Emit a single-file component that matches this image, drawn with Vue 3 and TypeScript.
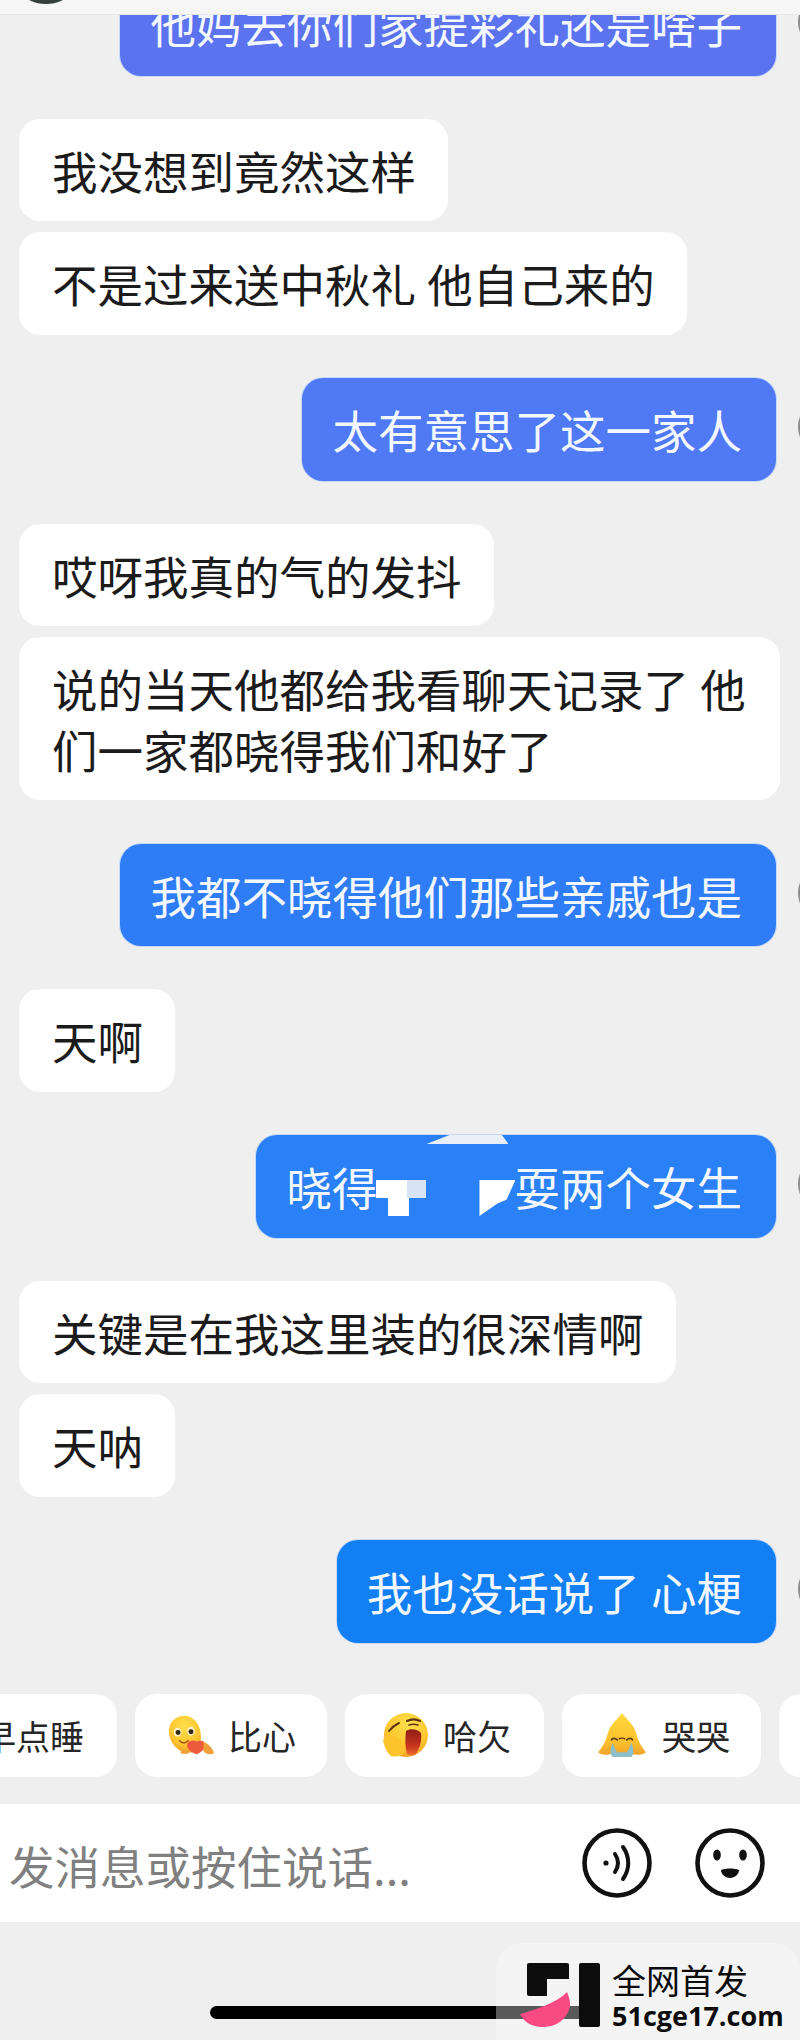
<script setup lang="ts">
type Msg = { side: "left" | "right"; text: string; color?: string };

const messages: Msg[] = [
  { side: "left", text: "我没想到竟然这样" },
  { side: "left", text: "不是过来送中秋礼 他自己来的" },
  { side: "right", text: "太有意思了这一家人", color: "#4f79f5" },
  { side: "left", text: "哎呀我真的气的发抖" },
  { side: "left", text: "说的当天他都给我看聊天记录了 他们一家都晓得我们和好了" },
  { side: "right", text: "我都不晓得他们那些亲戚也是", color: "#2f7df6" },
  { side: "left", text: "天啊" },
];

const messagesAfter: Msg[] = [
  { side: "left", text: "关键是在我这里装的很深情啊" },
  { side: "left", text: "天呐" },
  { side: "right", text: "我也没话说了 心梗", color: "#1280f4" },
];
</script>

<template>
  <div class="screen">
    <header class="topbar"><span class="top-avatar"></span></header>

    <main class="chat">
      <div class="msg right first">
        <div class="bubble" style="background: #5c73f0">他妈去你们家提彩礼还是啥子</div>
        <span class="avatar"></span>
      </div>

      <div v-for="(m, i) in messages" :key="i" class="msg" :class="m.side">
        <div class="bubble" :style="m.color ? { background: m.color } : undefined">{{ m.text }}</div>
        <span v-if="m.side === 'right'" class="avatar"></span>
      </div>

      <div class="msg right">
        <div class="bubble masked" style="background: #2a80f6">
          晓得<span class="hole"></span>耍两个女生
          <span class="mask-top"></span>
          <span class="mask-t"></span>
          <span class="mask-stem"></span>
          <span class="mask-corner"></span>
        </div>
        <span class="avatar"></span>
      </div>

      <div v-for="(m, i) in messagesAfter" :key="'b' + i" class="msg" :class="m.side">
        <div class="bubble" :style="m.color ? { background: m.color } : undefined">{{ m.text }}</div>
        <span v-if="m.side === 'right'" class="avatar"></span>
      </div>
    </main>

    <div class="chips">
      <div class="chip first-chip">早点睡</div>
      <div class="chip">
        <svg class="emo" viewBox="0 0 48 40">
          <defs>
            <radialGradient id="y1" cx="0.5" cy="0.3" r="0.75">
              <stop offset="0" stop-color="#ffe04c" />
              <stop offset="0.65" stop-color="#fcc52f" />
              <stop offset="1" stop-color="#ec9a25" />
            </radialGradient>
          </defs>
          <path d="M1 18C0 7 8 0 17 0c9 0 16 8 17 18 1 6 0 12-2 17-5 4-12 4-18 2C6 33 2 26 1 18z" fill="url(#y1)" />
          <ellipse cx="10" cy="17" rx="4" ry="4.6" fill="#fff3cc" />
          <ellipse cx="24" cy="16" rx="4" ry="4.6" fill="#fff3cc" />
          <circle cx="10.5" cy="17.5" r="2.6" fill="#33250f" />
          <circle cx="24" cy="16.5" r="2.6" fill="#33250f" />
          <path d="M12 26c3 3 6 3 9 0" fill="none" stroke="#a8551a" stroke-width="1.8" stroke-linecap="round" />
          <path d="M20 29c3-4 7-4 10-2 4-2 8-1 9 2 1 4-3 8-9 11-6-2-11-6-10-11z" fill="#ee5a3c" />
          <path d="M37 27c5 2 10 7 11 12-3 2-9 1-11-2z" fill="#f3a03a" />
          <path d="M14 36c3-2 7-1 8 3-3 1-6 1-9 0z" fill="#f3a03a" />
        </svg>
        <span>比心</span>
      </div>
      <div class="chip chip-wide">
        <svg class="emo" viewBox="0 0 46 44">
          <defs>
            <radialGradient id="y2" cx="0.55" cy="0.25" r="0.8">
              <stop offset="0" stop-color="#ffe04a" />
              <stop offset="0.65" stop-color="#fdc42e" />
              <stop offset="1" stop-color="#ee9b26" />
            </radialGradient>
            <linearGradient id="m2" x1="0" y1="0" x2="0" y2="1">
              <stop offset="0" stop-color="#8e1d16" />
              <stop offset="0.65" stop-color="#c9341f" />
              <stop offset="1" stop-color="#f2702c" />
            </linearGradient>
          </defs>
          <ellipse cx="24" cy="22" rx="22" ry="22" fill="url(#y2)" />
          <path d="M25 8c4-2 9-2 13 0" fill="none" stroke="#5b3512" stroke-width="2" stroke-linecap="round" />
          <path d="M27 12c3-1 6-1 9 0" fill="none" stroke="#5b3512" stroke-width="1.6" stroke-linecap="round" />
          <path d="M7 18c3-4 6-6 10-8" fill="none" stroke="#5b3512" stroke-width="2" stroke-linecap="round" />
          <path d="M24 18c4-3 12-2 15 2 1 8-1 14-5 21-3 2-6 2-9 0-2-7-2-16-1-23z" fill="url(#m2)" />
          <path d="M1 27c3-5 8-6 12-4 5 3 10 9 9 17-3 4-10 4-13 3-4-3-7-10-8-16z" fill="#fcc32d" />
        </svg>
        <span>哈欠</span>
      </div>
      <div class="chip chip-cry">
        <svg class="emo emo-cry" viewBox="0 0 50 46">
          <defs>
            <linearGradient id="y3" x1="0" y1="0" x2="0" y2="1">
              <stop offset="0" stop-color="#ffd83c" />
              <stop offset="0.7" stop-color="#fbc02d" />
              <stop offset="1" stop-color="#f0a12a" />
            </linearGradient>
          </defs>
          <path d="M25 0C29 6 38 12 40 22 42 30 46 36 50 41 46 44 42 44 38 43H12C8 44 4 44 0 41 4 36 8 30 10 22 12 12 21 6 25 0z" fill="url(#y3)" />
          <path d="M14 28c1-2 4-2 6 0M30 28c2-2 5-2 6 0" fill="none" stroke="#5b3a14" stroke-width="1.8" stroke-linecap="round" />
          <path d="M22 27c1-1 5-1 6 0" fill="none" stroke="#5b3a14" stroke-width="1.5" stroke-linecap="round" />
          <path d="M15 31C13 37 12 42 15 46H35C38 42 37 37 35 31 33 35 32 39 30 41H20C18 39 17 35 15 31z" fill="#8cbfc9" />
        </svg>
        <span>哭哭</span>
      </div>
      <div class="chip last-chip"></div>
    </div>

    <div class="inputbar">
      <span class="placeholder">发消息或按住说话...</span>
      <svg class="round-icon" viewBox="0 0 70 70">
        <circle cx="35" cy="35" r="32.5" fill="none" stroke="#111" stroke-width="4.6" />
        <circle cx="24" cy="35" r="2.6" fill="#111" />
        <path d="M33 26c4 6 4 12 0 18" fill="none" stroke="#111" stroke-width="4" stroke-linecap="round" />
        <path d="M41 19c7 10 7 22 0 32" fill="none" stroke="#111" stroke-width="4" stroke-linecap="round" />
      </svg>
      <svg class="round-icon" viewBox="0 0 70 70">
        <circle cx="35" cy="35" r="32.5" fill="none" stroke="#111" stroke-width="4.6" />
        <ellipse cx="22" cy="27" rx="3.8" ry="5.6" fill="#111" />
        <ellipse cx="48" cy="27" rx="3.8" ry="5.6" fill="#111" />
        <path d="M26 42c5-2 13-2 18 0 0 4-4 8-9 8s-9-4-9-8z" fill="#111" />
      </svg>
    </div>

    <footer class="bottom">
      <div class="home-bar"></div>
      <div class="watermark">
        <svg class="wm-logo" viewBox="0 0 73 64">
          <path d="M2 0h38a2 2 0 0 1 2 2v14H20v17H2a2 2 0 0 1-2-2V2a2 2 0 0 1 2-2z" fill="#0c0c0c" />
          <rect x="52" y="0" width="21" height="64" rx="2" fill="#0c0c0c" />
          <path d="M-7 51C5 48 30 40 40 29 44 38 44 45 40 51 35 60 26 64 15 64 5 64-3 59-7 51z" fill="#f94a83" />
        </svg>
        <div class="wm-text">
          <div class="wm-title">全网首发</div>
          <div class="wm-url">51cge17.com</div>
        </div>
      </div>
    </footer>
  </div>
</template>

<style scoped>
.screen {
  position: relative;
  width: 800px;
  height: 2040px;
  overflow: hidden;
  display: flex;
  flex-direction: column;
  background: #efefef;
  font-family: "Noto Sans CJK SC", "Noto Sans", sans-serif;
}

.topbar {
  position: relative;
  z-index: 2;
  height: 15px;
  flex: none;
  background: #f6f6f6;
  border-bottom: 1px solid #e6e6e6;
  box-sizing: border-box;
}
.top-avatar {
  position: absolute;
  left: 25px;
  top: -16px;
  width: 42px;
  height: 20px;
  border-radius: 50%;
  background: #33403c;
}

.chat {
  display: flex;
  flex-direction: column;
}

.msg {
  position: relative;
  display: flex;
  margin-top: 43.25px;
}
.msg.left {
  justify-content: flex-start;
  padding-left: 19px;
}
.msg.left + .msg.left {
  margin-top: 11px;
}
.msg.right {
  justify-content: flex-end;
  padding-right: 24px;
}
.msg.first {
  margin-top: -42px;
}

.bubble {
  position: relative;
  box-sizing: border-box;
  max-width: 761px;
  padding: 21px 32px 21px 33px;
  border-radius: 21px;
  background: #fff;
  color: #1b1b1b;
  font-size: 45.5px;
  line-height: 60.5px;
  word-spacing: 1px;
}
.msg.right .bubble {
  padding: 21px 34px 21px 30px;
  color: #f3f7ff;
  box-shadow: 0 0 0 1px rgba(150, 190, 255, 0.45);
}

.avatar {
  position: absolute;
  left: 798px;
  top: 50%;
  width: 60px;
  height: 60px;
  margin-top: -32px;
  border-radius: 50%;
  background: #8c8c8c;
}

.hole {
  display: inline-block;
  width: 137px;
}
.mask-top {
  position: absolute;
  left: 170px;
  top: 0;
  width: 82px;
  height: 9px;
  background: #e8eff8;
  clip-path: polygon(28% 0, 92% 0, 100% 100%, 0 100%);
}
.mask-t {
  position: absolute;
  left: 120px;
  top: 45px;
  width: 50px;
  height: 18px;
  background: linear-gradient(90deg, #fff 62%, #d8e4f4 62%);
}
.mask-stem {
  position: absolute;
  left: 132px;
  top: 63px;
  width: 21px;
  height: 18px;
  background: #fff;
}
.mask-corner {
  position: absolute;
  left: 223px;
  top: 45px;
  width: 36px;
  height: 36px;
  background: #fff;
  clip-path: polygon(0 0, 100% 0, 75% 55%, 50% 65%, 0 100%);
}

.chips {
  display: flex;
  gap: 18px;
  height: 83px;
  margin-top: 51px;
  margin-left: -48px;
  flex: none;
}
.chip {
  display: flex;
  align-items: center;
  flex: none;
  box-sizing: border-box;
  height: 83px;
  padding: 0 31px 0 33px;
  gap: 14px;
  border-radius: 22px;
  background: #fff;
  color: #262626;
  font-size: 34px;
}
.first-chip {
  padding: 0 33px 0 30px;
}
.chip-wide {
  padding: 0 33px 0 37px;
  gap: 15px;
}
.chip-cry {
  padding: 0 31px 0 35px;
  gap: 15px;
}
.last-chip {
  width: 80px;
}
.emo {
  width: 46px;
  height: 44px;
  flex: none;
}
.emo-cry {
  width: 50px;
}

.inputbar {
  display: flex;
  align-items: center;
  flex: none;
  height: 118px;
  margin-top: 27px;
  padding: 0 35px 0 9px;
  background: #fff;
  gap: 43px;
}
.placeholder {
  flex: 1;
  color: #808080;
  font-size: 45.5px;
  padding-top: 4px;
}
.round-icon {
  width: 70px;
  height: 70px;
  flex: none;
}

.bottom {
  position: relative;
  flex: 1;
  padding-top: 84px;
}
.home-bar {
  width: 385px;
  height: 13px;
  margin-left: 210px;
  border-radius: 7px;
  background: #000;
}
.watermark {
  position: absolute;
  left: 496px;
  top: 21px;
  right: 0;
  bottom: 0;
  display: flex;
  gap: 12px;
  padding: 20px 0 0 31px;
  border-radius: 26px 26px 0 0;
  background: rgba(255, 255, 255, 0.35);
}
.wm-logo {
  width: 73px;
  height: 64px;
  flex: none;
  overflow: visible;
}
.wm-text {
  color: #0c0c0c;
}
.wm-title {
  font-size: 34px;
  line-height: 34px;
}
.wm-url {
  margin-top: 3px;
  font-family: "Open Sans", sans-serif;
  font-weight: 700;
  font-size: 27px;
  line-height: 32px;
}
</style>

<style>
html,
body {
  margin: 0;
  background: #efefef;
}
</style>
